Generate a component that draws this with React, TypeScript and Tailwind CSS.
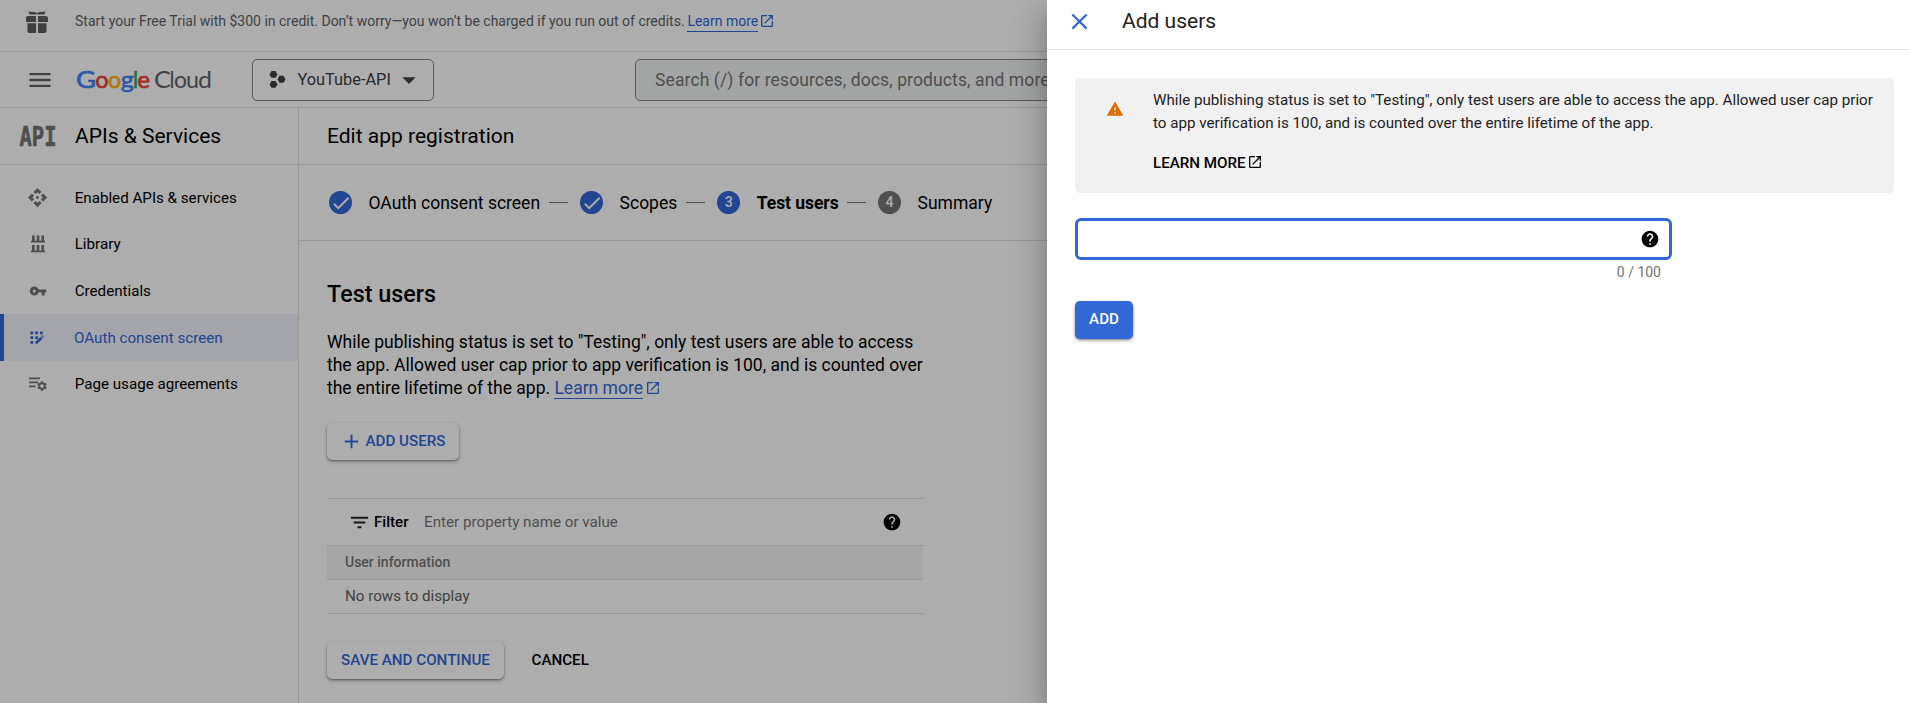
import React from "react";
import {
  MdAdd,
  MdApi,
  MdArrowDropDown,
  MdCheck,
  MdClose,
  MdFilterList,
  MdHelp,
  MdLaunch,
  MdMenu,
  MdSettings,
  MdVpnKey,
  MdWarning,
} from "react-icons/md";

function GiftIcon() {
  return (
    <svg width="22" height="22" viewBox="0 0 22 22" fill="#5f5f5f" className="shrink-0">
      <path d="M2 5h8v6H0V7a2 2 0 0 1 2-2zM12 5h8a2 2 0 0 1 2 2v4H12zM1.5 12.3H10V22H3.5a2 2 0 0 1-2-2zM12 12.3h8.500V20a2 2 0 0 1-2 2H12z" />
      <path d="M2.500 .5 9.500 1.200 11 2.300 12.500 1.200 19.500 .5 18.500 3.600 12.300 3.600 11 3 9.700 3.600 3.500 3.600z" />
    </svg>
  );
}

function LibraryIcon() {
  return (
    <svg width="16" height="18" viewBox="0 0 16 18" fill="#757575">
      <path d="M2 .5h2.700v6H2zM6.700 .5h2.700v6H6.700zM11.400 .5H14v6h-2.600zM1 5.800h14v1.700H1zM2 10h2.700v6H2zM6.700 10h2.700v6H6.700zM11.400 10H14v6h-2.600zM1 15.500h14v1.700H1z" />
    </svg>
  );
}

function ConsentIcon() {
  return (
    <svg width="14" height="14" viewBox="0 0 14 14" fill="#3367d6" className="mr-[2px]">
      <path d="M.5 .5h2.700v2.700H.5zM5.300 .5H8v2.700H5.300zM10 .5h2.700v2.700H10zM.5 5.300h2.700V8H.5zM5.300 5.300H8V8H5.300zM.5 10h2.700v2.700H.5zM5.300 11l5.200-5.200 1.900 1.900-5.200 5.100H5.300zM11.200 5.100l.8-.8 1.900 1.900-.8.8z" />
    </svg>
  );
}

function AgreementsIcon() {
  return (
    <span className="relative block h-[16px] w-[20px]">
      <svg width="20" height="16" viewBox="0 0 20 16" fill="#757575">
        <path d="M1 1.500h11v1.700H1zM1 5.500h9v1.700H1zM1 9.500h6.500v1.700H1z" />
      </svg>
      <MdSettings size={12} color="#757575" className="absolute left-[8px] top-[4px]" />
    </span>
  );
}

function ApiLogo() {
  return (
    <svg width="38" height="32" viewBox="0 -5 38 32" className="shrink-0 overflow-visible">
      <text
        x="0.500"
        y="20.500"
        textLength="37"
        lengthAdjust="spacingAndGlyphs"
        fill="#757575"
        stroke="#757575"
        strokeWidth=".6"
        fontFamily="'DejaVu Sans Mono', monospace"
        fontWeight="700"
        fontSize="26"
      >
        API
      </text>
    </svg>
  );
}

function GoogleCloudLogo() {
  const letters = [
    { c: "G", x: 0, w: 20, f: "#4285f4", b: true },
    { c: "o", x: 19.2, w: 13.4, f: "#ea4335", b: true },
    { c: "o", x: 32, w: 13.2, f: "#fbbc04", b: true },
    { c: "g", x: 44.800, w: 13, f: "#4285f4", b: true },
    { c: "l", x: 57, w: 5, f: "#34a853", b: true },
    { c: "e", x: 61.2, w: 12.8, f: "#ea4335", b: true },
    { c: "C", x: 78, w: 17, f: "#5f6368", b: false },
    { c: "l", x: 93.500, w: 5, f: "#5f6368", b: false },
    { c: "o", x: 98, w: 13, f: "#5f6368", b: false },
    { c: "u", x: 110, w: 13, f: "#5f6368", b: false },
    { c: "d", x: 122, w: 14, f: "#5f6368", b: false },
  ];
  return (
    <svg width="138" height="30" viewBox="0 0 138 30" className="shrink-0 overflow-visible">
      {letters.map((l, i) => (
        <text
          key={i}
          x={l.x}
          y="23"
          textLength={l.w}
          lengthAdjust="spacingAndGlyphs"
          fill={l.f}
          stroke={l.f}
          strokeWidth={l.b ? 0.7 : 0}
          fontFamily="Lato, sans-serif"
          fontSize="24"
        >
          {l.c}
        </text>
      ))}
    </svg>
  );
}

function ProjectIcon() {
  return (
    <svg width="17" height="19" viewBox="0 0 17 19" fill="#3c4043" className="shrink-0">
      <path d="M2.500 1h4L8.500 4.400 6.500 7.800h-4L.5 4.400zM2.500 11h4l2 3.400-2 3.400h-4l-2-3.400zM10.500 5.800h4l2 3.500-2 3.500h-4l-2-3.500z" />
    </svg>
  );
}

const navItems = [
  { label: "Enabled APIs & services", icon: <MdApi size={21} color="#757575" /> },
  { label: "Library", icon: <LibraryIcon /> },
  { label: "Credentials", icon: <MdVpnKey size={18} color="#757575" /> },
  { label: "OAuth consent screen", icon: <ConsentIcon />, active: true },
  { label: "Page usage agreements", icon: <AgreementsIcon /> },
];

function Dash() {
  return <span className="ml-[9px] mr-[12px] h-px w-[19px] bg-[#757575]" />;
}

function StepBadge({ children, muted }: { children: React.ReactNode; muted?: boolean }) {
  return (
    <span
      className={`mr-[16.5px] flex size-[23px] items-center justify-center rounded-full text-[14px] font-medium text-white ${
        muted ? "bg-[#757575]" : "bg-[#3367d6]"
      }`}
    >
      {children}
    </span>
  );
}

const raised =
  "flex items-center rounded-[5px] text-[15.17px] font-medium shadow-[0_1px_2px_rgba(0,0,0,0.35),0_2px_4px_rgba(0,0,0,0.2)]";

function TopBars() {
  return (
    <>
      <div className="flex h-[52px] shrink-0 items-center border-b border-[#e0e0e0] pb-[8px] pl-[26px] text-[14px] text-[#5f6368]">
        <GiftIcon />
        <span className="ml-[27px] whitespace-nowrap">
          Start your Free Trial with $300 in credit. Don’t worry—you won’t be charged if you run out of credits.
        </span>
        <a className="ml-[2.8px] mt-px h-[20px] border-b border-[#3367d6] leading-[19px] text-[#3367d6]">Learn more</a>
        <MdLaunch size={16} color="#3367d6" className="mb-[2px] ml-px" />
      </div>
      <div className="flex h-[56px] shrink-0 items-center border-b border-[#e0e0e0] pl-[26px]">
        <MdMenu size={28} color="#5f6368" />
        <div className="ml-[22px]">
          <GoogleCloudLogo />
        </div>
        <div className="ml-[38px] flex h-[42px] w-[182px] shrink-0 items-center rounded-[5px] border border-[#80868b] pl-[16px] text-[#3c4043]">
          <ProjectIcon />
          <span className="ml-[11.5px] pt-px text-[16.33px]">YouTube-API</span>
          <MdArrowDropDown size={32} className="ml-[2.5px]" />
        </div>
        <div className="ml-[201px] flex h-[42px] flex-1 items-center rounded-[5px] border border-[#80868b] bg-[#f1f3f4] pl-[19px] pt-px text-[17.5px] tracking-[0.11px] text-[#757575]">
          Search (/) for resources, docs, products, and more
        </div>
      </div>
    </>
  );
}

function Sidebar() {
  return (
    <aside className="flex w-[299px] shrink-0 flex-col border-r border-[#e0e0e0]">
      <div className="flex h-[57px] items-center border-b border-[#e0e0e0] pl-[19px]">
        <ApiLogo />
        <span className="ml-[18px] pt-[2px] text-[21px]">APIs &amp; Services</span>
      </div>
      <nav className="pt-[9.5px] text-[15.17px]">
        {navItems.map((n) => (
          <div
            key={n.label}
            className={`flex h-[46.6px] items-center border-l-4 ${
              n.active ? "border-[#3367d6] bg-[#f0f4fd] text-[#3367d6]" : "border-transparent"
            }`}
          >
            <span className="flex w-[67px] justify-center">{n.icon}</span>
            <span className={n.active ? "ml-[3px] pt-px" : "ml-[3.7px] pt-[0.5px]"}>{n.label}</span>
          </div>
        ))}
      </nav>
    </aside>
  );
}

function Main() {
  return (
    <main className="flex flex-1 flex-col">
      <h1 className="flex h-[57px] items-center border-b border-[#e0e0e0] pl-[28px] pt-[2px] text-[21px]">
        Edit app registration
      </h1>
      <div className="flex h-[76px] items-center border-b border-[#e0e0e0] pl-[30px] text-[17.5px]">
        <StepBadge>
          <MdCheck size={22} />
        </StepBadge>
        <span className="pt-px">OAuth consent screen</span>
        <Dash />
        <StepBadge>
          <MdCheck size={22} />
        </StepBadge>
        <span className="pt-px">Scopes</span>
        <Dash />
        <StepBadge>3</StepBadge>
        <span className="-mr-[0.5px] pt-px font-bold tracking-[-0.06px]">Test users</span>
        <Dash />
        <StepBadge muted>4</StepBadge>
        <span className="pt-px">Summary</span>
      </div>
      <div className="pl-[28px] pt-[39px]">
        <h2 className="text-[23.33px] font-medium leading-[28px]">Test users</h2>
        <p className="mt-[23px] w-[612px] text-[17.5px] leading-[23.2px]">
          While publishing status is set to "Testing", only test users are able to access
          <br />
          the app. Allowed user cap prior to app verification is 100, and is counted over
          <br />
          the entire lifetime of the app.{" "}
          <a className="border-b border-[#3367d6] text-[#3367d6]">Learn more</a>
          <MdLaunch size={16} color="#3367d6" className="ml-[2px] inline-block align-[-2px]" />
        </p>
        <button className={`${raised} mt-[22px] h-[37px] w-[132px] bg-white pl-[13px] text-[#3367d6]`}>
          <MdAdd size={23} />
          <span className="ml-[2.500px] whitespace-nowrap">ADD USERS</span>
        </button>
        <div className="mt-[38.5px] w-[597px]">
          <div className="flex h-[48px] items-center border-y border-[#e0e0e0] pl-[21px] pr-[22px] text-[15.17px]">
            <MdFilterList size={23} color="#212121" />
            <span className="ml-[3px] font-medium">Filter</span>
            <span className="ml-[15.5px] text-[#757575]">Enter property name or value</span>
            <MdHelp size={20} className="ml-auto" />
          </div>
          <div className="flex h-[34px] w-[596px] items-center border-b border-[#e0e0e0] bg-[#f5f5f5] pl-[18px] text-[14px] font-medium text-[#757575]">
            User information
          </div>
          <div className="flex h-[34px] w-[596px] items-center border-b border-[#e0e0e0] pl-[18px] text-[15.17px] text-[#5f5f5f]">
            No rows to display
          </div>
        </div>
        <div className="mt-[28px] flex items-center">
          <button className={`${raised} h-[37px] w-[177px] justify-center bg-white text-[#3367d6]`}>
            SAVE AND CONTINUE
          </button>
          <button className="ml-[27.5px] text-[15.17px] font-medium">CANCEL</button>
        </div>
      </div>
    </main>
  );
}

function AddUsersPanel() {
  return (
    <section className="absolute inset-y-0 right-0 w-[862px] bg-white text-[#212121] shadow-[0_9px_12px_-6px_rgba(0,0,0,0.2),0_19px_28px_2px_rgba(0,0,0,0.14),0_7px_35px_6px_rgba(0,0,0,0.12)]">
      <header className="flex h-[50px] items-center border-b border-[#e0e0e0] pb-[7px] pl-[19px]">
        <MdClose size={27} color="#3367d6" />
        <h2 className="ml-[29px] pt-px text-[21px]">Add users</h2>
      </header>
      <div className="pl-[28px] pr-[15px] pt-[28px]">
        <div className="flex h-[115px] rounded-[5px] bg-[#f1f1f1] pt-[11px]">
          <MdWarning size={18} color="#df6c00" className="ml-[31px] mt-[11px] shrink-0" />
          <div className="ml-[29px] text-[15.17px] leading-[23px]">
            <p className="whitespace-nowrap">
              While publishing status is set to "Testing", only test users are able to access the app. Allowed user cap prior
              <br />
              to app verification is 100, and is counted over the entire lifetime of the app.
            </p>
            <a className="mt-[17px] flex items-center font-medium text-black">
              LEARN MORE
              <MdLaunch size={16} className="mb-[3px] ml-[1.5px]" />
            </a>
          </div>
        </div>
        <div className="mt-[25px] flex h-[42px] w-[597px] items-center justify-end rounded-[6px] border-3 border-[#3367d6] pr-[9.5px]">
          <MdHelp size={20} color="#000" />
        </div>
        <div className="mt-[3px] w-[586px] text-right text-[14px] leading-[18px] text-[#757575]">0 / 100</div>
        <button className={`${raised} mt-[20px] h-[38px] w-[58px] justify-center bg-[#3367d6] pb-[2px] font-bold text-white`}>
          ADD
        </button>
      </div>
    </section>
  );
}

export default function App() {
  return (
    <div className="relative flex h-[703px] w-full flex-col overflow-hidden bg-white font-[Roboto,sans-serif] text-black">
      <TopBars />
      <div className="flex flex-1">
        <Sidebar />
        <Main />
      </div>
      <div className="absolute inset-0 bg-black/32" />
      <AddUsersPanel />
    </div>
  );
}
